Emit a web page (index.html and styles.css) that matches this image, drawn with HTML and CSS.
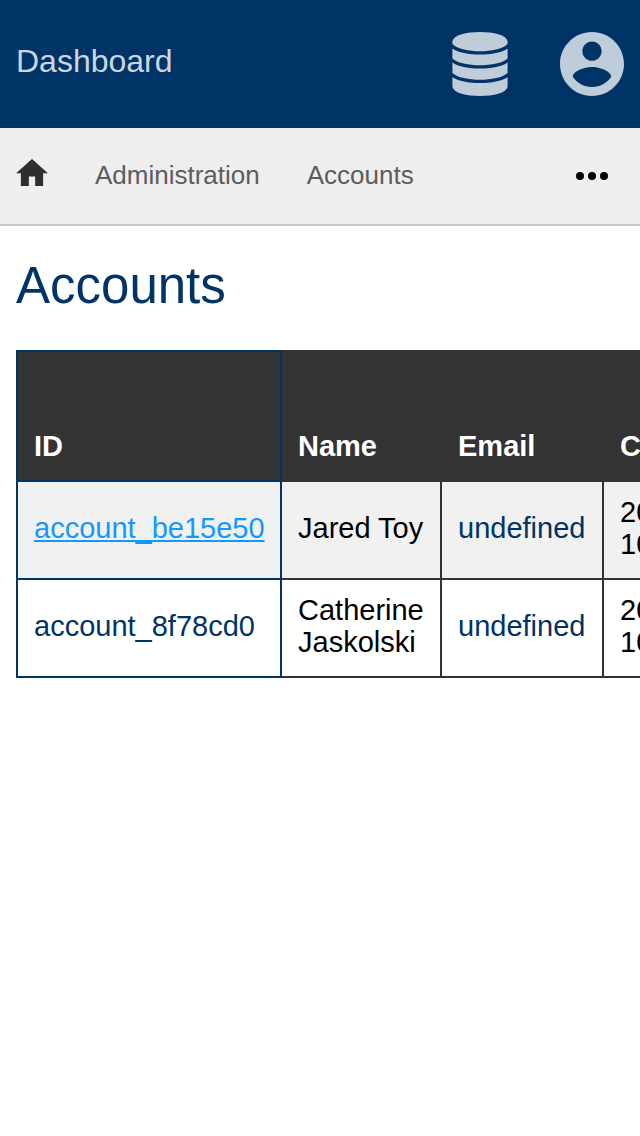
FILE: index.html
```html
<!DOCTYPE html>
<html lang="en">
<head>
<meta charset="utf-8">
<meta name="viewport" content="width=device-width, initial-scale=1">
<title>Accounts</title>
<link rel="stylesheet" href="styles.css">
</head>
<body>
<header class="topbar">
  <a class="brand" href="#">Dashboard</a>
  <div class="topbar-actions">
    <button class="icon-button" type="button" aria-label="Data">
      <svg width="56" height="64" viewBox="0 0 56 64" fill="currentColor" aria-hidden="true">
        <path d="M.4 9C2 3 14 0 28 0S54 3 55.600 9V12C51 17 39 19.300 28 19.300S5 17 .4 12Z"/>
        <path d="M.4 16.600C6 20.600 17 22.600 28 22.600S50 20.600 55.600 16.600V26.500C51 31 39 33.300 28 33.300S5 31 .4 26.500Z"/>
        <path d="M.4 30.600C6 34.600 17 36.600 28 36.600S50 34.600 55.600 30.600V41C51 45.500 39 47.800 28 47.800S5 45.500 .4 41Z"/>
        <path d="M.4 45C6 49.200 17 51 28 51S50 49.200 55.600 45V55C54 61 42 64 28 64S2 61 .4 55Z"/>
      </svg>
    </button>
    <button class="icon-button" type="button" aria-label="Profile">
      <svg width="64" height="64" viewBox="2 2 20 20" fill="currentColor" aria-hidden="true">
        <path d="M12 2C6.480 2 2 6.480 2 12s4.480 10 10 10 10-4.480 10-10S17.520 2 12 2zm0 3c1.660 0 3 1.340 3 3s-1.340 3-3 3-3-1.340-3-3 1.340-3 3-3zm0 14.200c-2.500 0-4.710-1.280-6-3.220.03-1.990 4-3.080 6-3.080 1.990 0 5.970 1.090 6 3.080-1.290 1.940-3.500 3.220-6 3.220z"/>
      </svg>
    </button>
  </div>
</header>
<nav class="breadcrumbs" aria-label="Breadcrumb">
  <a class="crumb crumb-home" href="#" aria-label="Home">
    <svg width="32" height="27" viewBox="2 3 20 17" fill="currentColor" aria-hidden="true"><path d="M10 20v-6h4v6h5v-8h3L12 3 2 12h3v8z"/></svg>
  </a>
  <a class="crumb" href="#">Administration</a>
  <a class="crumb" href="#">Accounts</a>
  <button class="more" type="button" aria-label="More">
    <svg width="32" height="8" viewBox="0 0 32 8" fill="currentColor" aria-hidden="true"><circle cx="4" cy="4" r="4"/><circle cx="16" cy="4" r="4"/><circle cx="28" cy="4" r="4"/></svg>
  </button>
</nav>
<main class="content">
  <h1 class="title">Accounts</h1>
  <div class="table-scroll">
    <table class="accounts">
      <colgroup><col class="col-id"><col class="col-name"><col class="col-email"><col class="col-created"></colgroup>
      <thead>
        <tr><th class="id" scope="col">ID</th><th scope="col">Name</th><th scope="col">Email</th><th scope="col">Created</th></tr>
      </thead>
      <tbody>
        <tr><td class="id"><a class="link active" href="#">account_be15e50</a></td><td>Jared Toy</td><td><a class="link" href="#">undefined</a></td><td>2022-10-04<br>10:24</td></tr>
        <tr><td class="id"><a class="link" href="#">account_8f78cd0</a></td><td>Catherine Jaskolski</td><td><a class="link" href="#">undefined</a></td><td>2022-10-04<br>10:24</td></tr>
      </tbody>
    </table>
  </div>
</main>
</body>
</html>
```
FILE: styles.css
```css
* {
  box-sizing: border-box;
}

body {
  margin: 0;
  background: #fff;
  color: #000;
  font-family: "Liberation Sans", Arial, sans-serif;
  font-size: 29px;
  line-height: 32px;
}

button {
  padding: 0;
  border: 0;
  background: none;
  cursor: pointer;
}

svg {
  display: block;
}

.topbar {
  display: flex;
  justify-content: space-between;
  align-items: flex-start;
  padding: 32px 16px;
  background: #003366;
}

.brand {
  color: #ccd6e0;
  font-size: 32px;
  line-height: 58px;
  text-decoration: none;
}

.topbar-actions {
  display: flex;
  gap: 48px;
}

.icon-button {
  display: flex;
  justify-content: center;
  width: 64px;
  color: #bfccd9;
}

.breadcrumbs {
  display: flex;
  align-items: center;
  gap: 47px;
  padding: 0 32px 0 16px;
  border-bottom: 2px solid #c8c8c8;
  background: #eee;
}

.crumb {
  padding-bottom: 2px;
  color: #5c5c5c;
  font-size: 26px;
  line-height: 94px;
  text-decoration: none;
}

.crumb-home {
  padding-bottom: 8px;
  color: #2e2e2e;
}

.more {
  margin-left: auto;
  color: #000;
}

.content {
  padding: 30px 0 32px 16px;
}

.title {
  margin: 0 0 34px;
  color: #003366;
  font-size: 51px;
  font-weight: 400;
  line-height: 60px;
}

.table-scroll {
  overflow-x: auto;
  scrollbar-width: none;
}

.accounts {
  width: 788px;
  border-collapse: collapse;
  table-layout: fixed;
}

.col-id {
  width: 264px;
}

.col-name {
  width: 160px;
}

.col-email {
  width: 162px;
}

.accounts th,
.accounts td {
  padding: 14px 16px 18px;
  border: 2px solid #333;
  text-align: left;
}

.accounts th {
  height: 130px;
  background: #333;
  color: #fff;
  vertical-align: bottom;
}

.accounts .id {
  border-color: #003366;
}

.accounts tbody tr:nth-child(odd) {
  background: #f1f1f1;
}

.link {
  color: #003366;
  text-decoration: none;
}

.link.active {
  color: #1199ff;
  text-decoration: underline;
}
```
